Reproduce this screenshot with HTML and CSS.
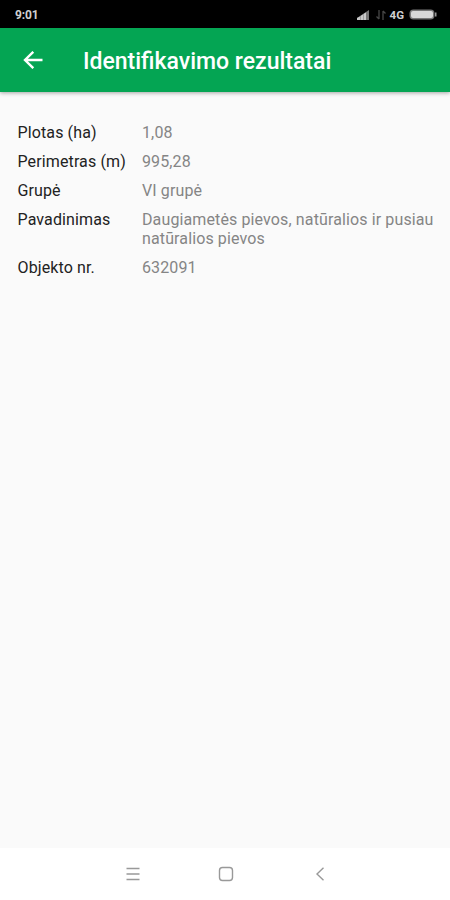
FILE: index.html
```html
<!DOCTYPE html>
<html lang="lt">
<head>
<meta charset="UTF-8">
<meta name="viewport" content="width=device-width, initial-scale=1.0">
<title>Identifikavimo rezultatai</title>
<link rel="stylesheet" href="styles.css">
</head>
<body>
<div class="status-bar">
    <span class="time">9:01</span>
    <div class="status-icons">
        <svg class="signal" width="13" height="10" viewBox="0 0 13 10">
            <path d="M0 10V8l12-8v10z" fill="#777"/>
            <path d="M0 10V8l3-1.500V10zM3.500 10V6l2.500-1.500V10zM6.500 10V4L9 2.500V10z" fill="#c8c8c8"/>
        </svg>
        <svg class="transfer" width="10" height="10" viewBox="0 0 10 10" fill="none" stroke="#484848" stroke-width="1.300">
            <path d="M3 0v9M.5 6.500L3 9M7 10V1M9.500 3.500L7 1"/>
        </svg>
        <span class="network">4G</span>
        <svg class="battery" width="28" height="11" viewBox="0 0 28 11">
            <rect x=".5" y=".5" width="25" height="10" rx="4" fill="#777"/>
            <rect x="2" y="2" width="22" height="7" rx="2" fill="#d8d8d8"/>
            <path d="M26 3.500h1.500v4H26z" fill="#999"/>
        </svg>
    </div>
</div>

<header class="toolbar">
    <svg class="back" width="20" height="18" viewBox="0 0 20 18" fill="none" stroke="#fff" stroke-width="2.400">
        <path d="M19.500 9H2M10.300 .8L2 9l8.300 8.200"/>
    </svg>
    <h1 class="title">Identifikavimo rezultatai</h1>
</header>

<main class="content">
    <dl class="results">
        <dt>Plotas (ha)</dt>
        <dd>1,08</dd>
        <dt>Perimetras (m)</dt>
        <dd>995,28</dd>
        <dt>Grupė</dt>
        <dd>VI grupė</dd>
        <dt>Pavadinimas</dt>
        <dd>Daugiametės pievos, natūralios ir pusiau natūralios pievos</dd>
        <dt>Objekto nr.</dt>
        <dd>632091</dd>
    </dl>
</main>

<nav class="nav-bar">
    <svg width="14" height="14" viewBox="0 0 14 14" stroke="#999" stroke-width="1.300">
        <path d="M.5 1.500h13M.5 7h13M.5 12.500h13"/>
    </svg>
    <svg width="16" height="16" viewBox="0 0 16 16" fill="none" stroke="#999" stroke-width="1.400">
        <rect x="1.500" y="1.500" width="13" height="13" rx="3"/>
    </svg>
    <svg width="14" height="14" viewBox="0 0 14 14" fill="none" stroke="#999" stroke-width="1.400">
        <path d="M11.500 .8L5 7l6.500 6.200"/>
    </svg>
</nav>
</body>
</html>
```

FILE: styles.css
```css
:root {
    --primary: #04a553;
    --bg: #fafafa;
    --text-primary: #222;
    --text-secondary: #858585;
}

* {
    box-sizing: border-box;
}

body {
    margin: 0;
    height: 900px;
    display: flex;
    flex-direction: column;
    background: var(--bg);
    font-family: Roboto, sans-serif;
    overflow: hidden;
}

.status-bar {
    display: flex;
    align-items: center;
    justify-content: space-between;
    height: 28px;
    padding: 1px 13px 0 15px;
    background: #000;
    color: #d0d0d0;
}

.time {
    padding-top: 1px;
    font-size: 12px;
    font-weight: bold;
    letter-spacing: -0.1px;
}

.status-icons {
    display: flex;
    align-items: center;
}

.transfer {
    margin-left: 6px;
}

.network {
    margin: 0 5px 0 4px;
    font-size: 11.5px;
    font-weight: bold;
}

.toolbar {
    display: flex;
    align-items: center;
    height: 64px;
    padding: 0 22px 0 23px;
    background: var(--primary);
    box-shadow: 0 1px 4px rgba(0,0,0,0.35);
}

.title {
    margin: 0 0 0 40px;
    padding-top: 4px;
    color: #fff;
    font-size: 23px;
    font-weight: 500;
    line-height: 28px;
    white-space: nowrap;
}

.content {
    flex: 1;
    padding: 31px 10px 0 17.5px;
}

.results {
    display: grid;
    grid-template-columns: 124.5px 1fr;
    row-gap: 10px;
    margin: 0;
    font-size: 16px;
    line-height: 19px;
    letter-spacing: 0.12px;
}

.results dt {
    color: var(--text-primary);
}

.results dd {
    margin: 0;
    color: var(--text-secondary);
}

.nav-bar {
    display: flex;
    align-items: center;
    justify-content: space-between;
    height: 52px;
    padding: 0 124px 1px 126px;
    background: #fff;
}
```
